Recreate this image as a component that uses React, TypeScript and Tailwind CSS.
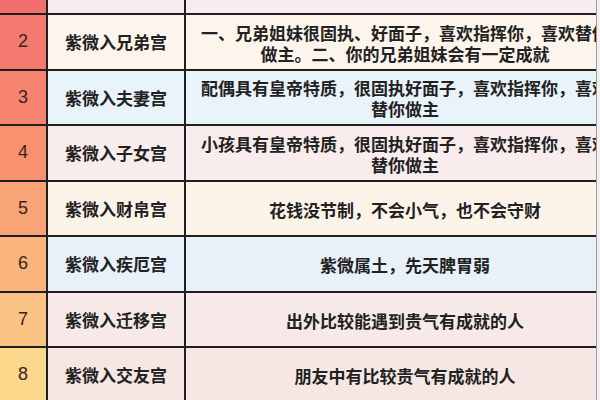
import React from 'react';

// 紫微星入十二宫 table (cropped view)

type Row = {
  no: string;
  numBg: string;
  rowBg: string;
  name: string;
  lines: string[];
};

const rows: Row[] = [
  {
    no: '2',
    numBg: 'bg-[#f47971]',
    rowBg: 'bg-[#fdf5eb]',
    name: '紫微入兄弟宫',
    lines: ['一、兄弟姐妹很固执、好面子，喜欢指挥你，喜欢替你', '做主。二、你的兄弟姐妹会有一定成就'],
  },
  {
    no: '3',
    numBg: 'bg-[#f6846f]',
    rowBg: 'bg-[#e9f3fa]',
    name: '紫微入夫妻宫',
    lines: ['配偶具有皇帝特质，很固执好面子，喜欢指挥你，喜欢', '替你做主'],
  },
  {
    no: '4',
    numBg: 'bg-[#f7916e]',
    rowBg: 'bg-[#f8ecec]',
    name: '紫微入子女宫',
    lines: ['小孩具有皇帝特质，很固执好面子，喜欢指挥你，喜欢', '替你做主'],
  },
  {
    no: '5',
    numBg: 'bg-[#f9a476]',
    rowBg: 'bg-[#fdf4e9]',
    name: '紫微入财帛宫',
    lines: ['花钱没节制，不会小气，也不会守财'],
  },
  {
    no: '6',
    numBg: 'bg-[#f9b37c]',
    rowBg: 'bg-[#e8f1f9]',
    name: '紫微入疾厄宫',
    lines: ['紫微属土，先天脾胃弱'],
  },
  {
    no: '7',
    numBg: 'bg-[#fac384]',
    rowBg: 'bg-[#f7e9e7]',
    name: '紫微入迁移宫',
    lines: ['出外比较能遇到贵气有成就的人'],
  },
  {
    no: '8',
    numBg: 'bg-[#fcd88c]',
    rowBg: 'bg-[#f6e7e4]',
    name: '紫微入交友宫',
    lines: ['朋友中有比较贵气有成就的人'],
  },
];

const cjk = "font-['Noto_Sans_CJK_SC','Noto_Sans',sans-serif]";

const TableRow: React.FC<{ row: Row }> = ({ row }) => (
  <div className="flex h-[55.5px] border-b-2 border-[#1f1f1f]">
    <div
      className={`w-[46px] shrink-0 flex items-center justify-center ${row.numBg} text-[18px] text-[#3a231d] font-['Liberation_Sans',sans-serif]`}
    >
      {row.no}
    </div>
    <div
      className={`w-[138px] shrink-0 border-l-2 border-[#1f1f1f] flex items-center justify-center ${row.rowBg} ${cjk} text-[17px] font-bold text-[#222]`}
    >
      {row.name}
    </div>
    <div className={`relative flex-1 overflow-hidden border-l-2 border-[#1f1f1f] ${row.rowBg}`}>
      <div
        className={`absolute inset-y-0 left-0 w-[438px] flex flex-col items-center justify-center pt-[2px] ${cjk} text-[17px] leading-[21px] font-bold text-[#222] whitespace-nowrap`}
      >
        {row.lines.map((l, i) => (
          <div key={i}>{l}</div>
        ))}
      </div>
    </div>
  </div>
);

export default function App() {
  return (
    <div className="w-[600px] h-[400px] overflow-hidden bg-[#f3eef0] flex">
      <div className="w-[597px] shrink-0 border-r border-[#9a9a9a]">
        {/* partially visible first row */}
        <div className="flex h-[15px] border-b-2 border-[#1f1f1f]">
          <div className="w-[46px] shrink-0 bg-[#f26f6f]" />
          <div className="w-[138px] shrink-0 border-l-2 border-[#1f1f1f] bg-[#f6ecef]" />
          <div className="flex-1 border-l-2 border-[#1f1f1f] bg-[#f7edf0]" />
        </div>
        {rows.map((r) => (
          <TableRow key={r.no} row={r} />
        ))}
      </div>
    </div>
  );
}
